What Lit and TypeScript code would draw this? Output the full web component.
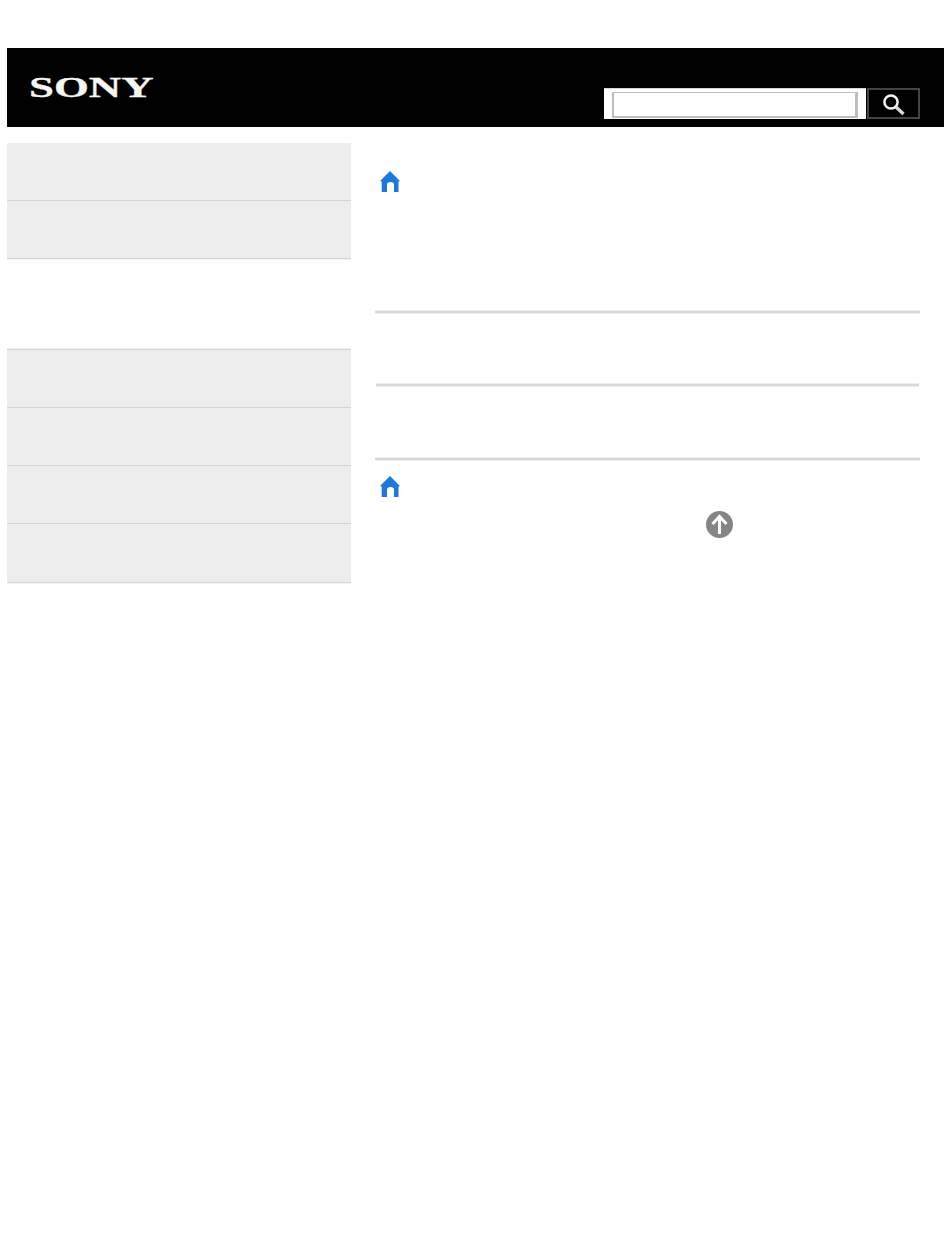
import { LitElement, html, css } from "lit";
import { customElement } from "lit/decorators.js";

const home = html`<svg viewBox="0 0 20 21" width="20" height="21" aria-hidden="true"><path fill="#1a78e0" d="M10 0 L20 10 L18.5 10.5 L18.5 21 L14 21 L14 13.5 Q14 11 10.5 11 Q7 11 7 13.5 L7 21 L1.7 21 L1.7 10.5 L0 10 Z"/></svg>`;

@customElement("app-root")
export class AppRoot extends LitElement {
  static styles = css`
    :host { display: block; width: 950px; height: 1237px; background: #fff; font-family: "Liberation Sans", Arial, sans-serif; overflow: hidden; }
    .page { padding: 48px 6px 0 7px; }
    .header { height: 79px; background: #000; display: flex; justify-content: space-between; align-items: flex-start; padding-right: 24px; }
    .logo { margin: 21px 0 0 22px; height: 36px; line-height: 36px; color: #f6f6f0; font-family: "Liberation Serif", serif; font-weight: 700; font-size: 30px; transform: scaleX(1.495); transform-origin: left center; -webkit-text-stroke: 0.3px #f6f6f0; }
    .search { margin-top: 40px; display: flex; gap: 1px; height: 31px; }
    .field { width: 262px; background: #fff; padding: 3px 8px 0 8px; box-sizing: border-box; height: 31px; border-top: 1px solid #d8d8d8; }
    .field input { display: block; width: 100%; height: 26px; box-sizing: border-box; border-style: solid; border-color: #bdbdbd; border-width: 1px 3px 2px 2px; background: #fff; padding: 0; margin: 0; outline: none; }
    .btn { width: 53px; height: 31px; box-sizing: border-box; border: 2px solid #444; background: #000; display: flex; align-items: center; justify-content: center; padding: 0; }
    .body { display: flex; margin-top: 16px; }
    .side { width: 344px; display: flex; flex-direction: column; }
    .item { height: 57px; background: #ededed; border-bottom: 1px solid #d4d4d4; box-shadow: 0 1px 0 #f6f6f6; }
    .item.b { height: 58px; }
    .spacer { height: 91px; border-bottom: 1px solid #d4d4d4; box-sizing: border-box; box-shadow: inset 0 -1px 0 #f3f3f3; }
    .main { width: 545px; margin-left: 24px; display: flex; flex-direction: column; }
    .home { height: 21px; margin: 28px 0 0 5px; }
    .rule { height: 2px; background: #d8d8d8; border-top: 1px solid #eeeeee; border-bottom: 1px solid #eeeeee; }
    .r1 { margin-top: 118px; }
    .r2 { margin: 69px 1px 0 1px; }
    .r3 { margin-top: 70px; }
    .home2 { height: 21px; margin: 15px 0 0 5px; }
    .top { align-self: flex-start; margin: 14px 0 0 331px; width: 27px; height: 27px; }
    svg { display: block; }
  `;

  render() {
    return html`<div class="page">
      <header class="header">
        <div class="logo">SONY</div>
        <div class="search">
          <div class="field"><input type="text" aria-label="Search" /></div>
          <button class="btn" aria-label="Search">
            <svg viewBox="0 0 24 24" width="24" height="24"><circle cx="9" cy="10" r="6.6" fill="none" stroke="#f2f2f2" stroke-width="2.5"/><path d="M14 15 L21.5 22" stroke="#d8d8d8" stroke-width="3.4"/></svg>
          </button>
        </div>
      </header>
      <div class="body">
        <nav class="side">
          <div class="item"></div>
          <div class="item"></div>
          <div class="spacer"></div>
          <div class="item"></div>
          <div class="item"></div>
          <div class="item"></div>
          <div class="item b"></div>
        </nav>
        <main class="main">
          <div class="home">${home}</div>
          <div class="rule r1"></div>
          <div class="rule r2"></div>
          <div class="rule r3"></div>
          <div class="home2">${home}</div>
          <div class="top">
            <svg viewBox="0 0 27 27" width="27" height="27"><circle cx="13.5" cy="13.5" r="13.5" fill="#858585"/><path d="M13.5 23 V5.5 M6.5 13 L13.5 5.5 L20.5 13" fill="none" stroke="#fff" stroke-width="3"/></svg>
          </div>
        </main>
      </div>
    </div>`;
  }
}
